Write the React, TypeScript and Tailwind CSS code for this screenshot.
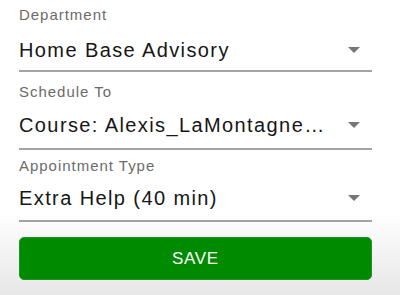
type FieldProps = {
  label: string;
  value: string;
  labelTop: string;
  valueTop: string;
  bottom: string;
};

function Caret() {
  return (
    <svg width="12" height="6" viewBox="0 0 12 6" className="shrink-0">
      <polygon points="0,0 12,0 6,6" fill="#767676" />
    </svg>
  );
}

function SelectField({ label, value, labelTop, valueTop, bottom }: FieldProps) {
  return (
    <div className={`flex flex-col border-b-2 border-[#a3a3a3] ${bottom}`}>
      <label className={`h-[18px] text-[15px] leading-[18px] tracking-[0.065em] text-[#6b6b6b] ${labelTop}`}>
        {label}
      </label>
      <div className={`flex h-[24px] items-center gap-3 pr-3 ${valueTop}`}>
        <span className="min-w-0 flex-1 truncate text-[20px] leading-[24px] tracking-[0.07em] text-[#161616]">
          {value}
        </span>
        <Caret />
      </div>
    </div>
  );
}

export default function App() {
  return (
    <div
      className="flex h-[295px] w-[400px] flex-col bg-[linear-gradient(to_bottom,#ffffff_72%,#e7e7e7)] pl-[19px] pr-[28px]"
      style={{ fontFamily: '"Liberation Sans", Arial, sans-serif' }}
    >
      <SelectField
        label="Department"
        value="Home Base Advisory"
        labelTop="mt-[6px]"
        valueTop="mt-[14px]"
        bottom="pb-[8px]"
      />
      <SelectField
        label="Schedule To"
        value="Course: Alexis_LaMontagne…"
        labelTop="mt-[11px]"
        valueTop="mt-[12px]"
        bottom="pb-[11px]"
      />
      <SelectField
        label="Appointment Type"
        value="Extra Help (40 min)"
        labelTop="mt-[7px]"
        valueTop="mt-[11px]"
        bottom="pb-[10px]"
      />
      <button
        type="button"
        className="mt-[15px] h-[43px] w-full rounded-[5px] border border-[#1d961d] bg-[#008a00] text-[17px] tracking-[0.04em] text-white"
      >
        SAVE
      </button>
    </div>
  );
}
